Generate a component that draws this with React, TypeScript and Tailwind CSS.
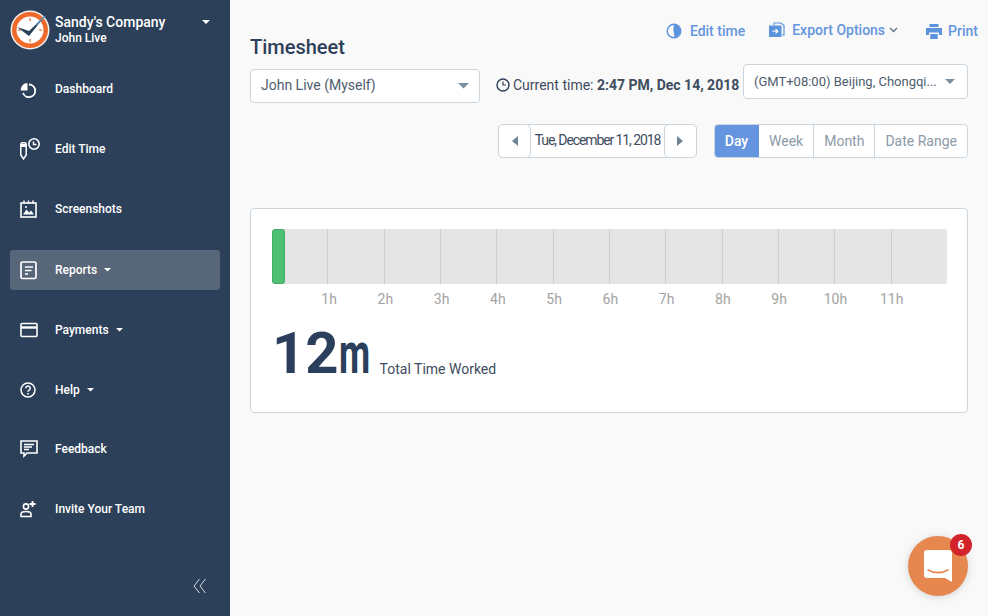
import React from "react";

const white = "#ffffff";

const DashIcon = () => (
  <svg width="17" height="20" viewBox="0 0 17 20" fill="none">
    <path d="M7.5 4v7.5H.7C.7 7.5 3.5 4 7.5 4z" fill={white} />
    <path d="M9 5.5a6.3 6.3 0 1 1-6 8.5" stroke={white} strokeWidth="1.8" />
  </svg>
);

const EditTimeIcon = () => (
  <svg width="21" height="24" viewBox="0 0 21 24" fill="none">
    <path d="M.8 7.5c0-1 .7-1.7 1.7-1.7h2c1 0 1.7.7 1.7 1.7V18l-2.700 4-2.700-4z" stroke={white} strokeWidth="1.5" />
    <path d="M.8 7h5.4v3H.8z" fill={white} />
    <circle cx="14" cy="7" r="5.2" stroke={white} strokeWidth="1.6" />
    <path d="M13.5 4.5v3h3" stroke={white} strokeWidth="1.4" />
  </svg>
);

const ScreenshotIcon = () => (
  <svg width="17" height="18" viewBox="0 0 17 18" fill="none">
    <rect x="1" y="3" width="15" height="14" stroke={white} strokeWidth="1.6" />
    <path d="M4 .5v3M8.5.5v3M13 .5v3" stroke={white} strokeWidth="1.5" />
    <path d="M3 14.5l3.5-5 2.5 3 2-2 3 4z" fill={white} />
    <circle cx="6" cy="7" r="1" fill={white} />
  </svg>
);

const ReportIcon = () => (
  <svg width="18" height="20" viewBox="0 0 18 20" fill="none">
    <rect x="1" y="2" width="15" height="16.5" rx="1.5" stroke={white} strokeWidth="1.7" />
    <path d="M5 7h8M5 10.5h6.5" stroke={white} strokeWidth="1.6" />
    <path d="M5 14h3" stroke={white} strokeWidth="1.6" />
  </svg>
);

const CardIcon = () => (
  <svg width="18" height="16" viewBox="0 0 18 16" fill="none">
    <rect x="1" y="1.5" width="16" height="13" rx="1" stroke={white} strokeWidth="1.6" />
    <path d="M1 5.5h16" stroke={white} strokeWidth="2.4" />
  </svg>
);

const HelpIcon = () => (
  <svg width="16" height="16" viewBox="0 0 16 16" fill="none">
    <circle cx="8" cy="8" r="7" stroke={white} strokeWidth="1.5" />
    <path d="M5.8 6.3a2.2 2.2 0 1 1 3.4 1.8c-.8.5-1.2.9-1.2 1.7" stroke={white} strokeWidth="1.5" />
    <path d="M7.2 11h1.6v1.6H7.2z" fill={white} />
  </svg>
);

const FeedbackIcon = () => (
  <svg width="18" height="18" viewBox="0 0 18 18" fill="none">
    <path d="M1 1h16v12H7l-3 3v-3H1z" stroke={white} strokeWidth="1.6" />
    <path d="M4 4.5h10M4 7h8M4 9.5h5" stroke={white} strokeWidth="1.4" />
  </svg>
);

const InviteIcon = () => (
  <svg width="17" height="18" viewBox="0 0 17 18" fill="none">
    <circle cx="6" cy="6.5" r="2.6" stroke={white} strokeWidth="1.6" />
    <path d="M1 16.5V14c0-1.5 2.5-2.5 5-2.5s5 1 5 2.500v2.500z" stroke={white} strokeWidth="1.6" />
    <path d="M12.5 1v6M9.5 4h6" stroke={white} strokeWidth="1.8" />
  </svg>
);

const Caret = ({ color = "#ffffff", size = 4 }: { color?: string; size?: number }) => (
  <svg width={size * 2} height={size} viewBox="0 0 8 4">
    <path d="M0 0h8L4 4z" fill={color} />
  </svg>
);

const Logo = () => (
  <svg width="40" height="40" viewBox="0 0 40 40" fill="none" className="shrink-0">
    <circle cx="20" cy="20" r="19.5" fill="#f2f2f2" />
    <circle cx="20" cy="20" r="18" fill="#ee6a2b" />
    <circle cx="20" cy="20" r="13.5" fill="#ffffff" />
    <path d="M20 8v3M20 29v3M8 20h3M29 20h3" stroke="#e98a5a" strokeWidth="1.5" />
    <path d="M7 17l12 4L35 6 19 26z" fill="#2b4059" />
    <path d="M26 15L35 6" stroke="#4f90c8" strokeWidth="1.5" />
  </svg>
);

type NavItem = {
  label: string;
  icon: React.ReactNode;
  caret?: boolean;
  active?: boolean;
  className: string;
};

const navItems: NavItem[] = [
  { label: "Dashboard", icon: <DashIcon />, className: "mt-[19px]" },
  { label: "Edit Time", icon: <EditTimeIcon />, className: "mt-5" },
  { label: "Screenshots", icon: <ScreenshotIcon />, className: "mt-5" },
  { label: "Reports", icon: <ReportIcon />, caret: true, active: true, className: "mt-[21px]" },
  { label: "Payments", icon: <CardIcon />, caret: true, className: "mt-5" },
  { label: "Help", icon: <HelpIcon />, caret: true, className: "mt-5" },
  { label: "Feedback", icon: <FeedbackIcon />, className: "mt-[19px]" },
  { label: "Invite Your Team", icon: <InviteIcon />, className: "mt-5" },
];

const Sidebar = () => (
  <aside className="flex h-full w-[230px] shrink-0 flex-col bg-[#2c4059] text-white">
    <div className="flex h-[50px] items-end pl-[10px]">
      <Logo />
      <div className="ml-[5px] flex-1 pb-[5px]">
        <div className="flex items-center">
          <p className="w-[147px] text-[14px] leading-[18px] font-medium">Sandy's Company</p>
          <Caret />
        </div>
        <p className="text-[12px] leading-[14px] font-medium">John Live</p>
      </div>
    </div>
    <nav className="flex flex-col px-[10px]">
      {navItems.map((item) => (
        <div
          key={item.label}
          className={`flex h-10 items-center rounded-[3px] ${item.className} ${
            item.active ? "bg-[#576678]" : ""
          }`}
        >
          <span className="flex w-[45px] pl-[10px]">{item.icon}</span>
          <span className="text-[12px] font-medium">{item.label}</span>
          {item.caret && (
            <span className="ml-[7px]">
              <Caret size={3.5} />
            </span>
          )}
        </div>
      ))}
    </nav>
    <div className="mt-auto flex justify-end pr-[23px] pb-[22px]">
      <svg width="14" height="16" viewBox="0 0 14 16" fill="none">
        <path d="M6.5 1L1 8l5.5 7M12.5 1L7 8l5.5 7" stroke="#d5dae0" strokeWidth="1" />
      </svg>
    </div>
  </aside>
);

const TopActions = () => (
  <div className="flex items-center text-[14px] leading-5 font-medium text-[#6495de]">
    <span className="flex items-center gap-[8px]">
      <svg width="16" height="16" viewBox="0 0 16 16" fill="none">
        <circle cx="8" cy="8" r="6.8" stroke="#5b93dc" strokeWidth="1.4" />
        <path d="M8 1.5a6.5 6.5 0 0 1 0 13C9.5 12 6 8 8 1.5z" fill="#5b93dc" />
      </svg>
      Edit time
    </span>
    <span className="mb-[2px] ml-[24px] flex items-center gap-[7px]">
      <svg width="16" height="16" viewBox="0 0 16 16" fill="none">
        <path d="M5 3V1h7l3 2.5V13h-2" stroke="#5b93dc" strokeWidth="1.2" />
        <path d="M0 3.5h12.5V15H0z" fill="#5b93dc" />
        <path d="M3.5 9.2h5M6.5 6.8l2.4 2.4-2.4 2.4" stroke="#f9f9f9" strokeWidth="1.2" />
      </svg>
      Export Options
      <svg width="9" height="6" viewBox="0 0 9 6" fill="none" className="-ml-[3px]">
        <path d="M1 1l3.5 3.5L8 1" stroke="#5f7890" strokeWidth="1.4" />
      </svg>
    </span>
    <span className="ml-[28px] flex items-center gap-[6px]">
      <svg width="16" height="15" viewBox="0 0 16 15">
        <path d="M3.5 0h9v3h-9z M0 4h16v7h-3V8.5H3V11H0z M4.3 10h7.4v5H4.3z" fill="#5b93dc" />
      </svg>
      Print
    </span>
  </div>
);

const PagerButton = ({ dir }: { dir: "left" | "right" }) => (
  <span className="flex h-full w-[33px] items-center justify-center rounded-[5px] border border-[#cbd5de] bg-white">
    <svg width="6" height="10" viewBox="0 0 6 10">
      <path d={dir === "left" ? "M6 0v10L0 5z" : "M0 0v10l6-5z"} fill="#6f8596" />
    </svg>
  </span>
);

const tabs = ["Week", "Month", "Date Range"];
const hours = ["1h", "2h", "3h", "4h", "5h", "6h", "7h", "8h", "9h", "10h", "11h"];

const Chart = () => (
  <div className="mt-5 mr-5 ml-[21px]">
    <div className="relative flex h-[55px] rounded-[3px] bg-[#e5e5e5]">
      {Array.from({ length: 12 }).map((_, i) => (
        <div key={i} className="flex-1 border-l border-[#cdcdcd] first:border-l-0" />
      ))}
      <div className="absolute top-0 left-0 h-full w-[13px] rounded-[3px] border border-[#3fa968] bg-[#4fc072]" />
    </div>
    <div className="mt-[6px] flex pl-[29px]">
      {hours.map((h) => (
        <span key={h} className="w-[56.25px] text-center text-[14px] leading-[18px] text-[#a3a3a3]">
          {h}
        </span>
      ))}
    </div>
  </div>
);

export default function App() {
  return (
    <div className="flex h-[616px] w-[988px] overflow-hidden bg-[#f9f9f9] font-['Roboto',sans-serif]">
      <Sidebar />
      <main className="relative flex-1 pr-5 pl-5 text-[#3e4c5e]">
        <div className="flex items-start justify-between">
          <h1 className="mt-[35px] text-[20px] leading-[24px] font-medium text-[#2d4059]">Timesheet</h1>
          <div className="mt-[20px] -mr-[10px]">
            <TopActions />
          </div>
        </div>

        <div className="mt-[5px] flex items-start">
          <div className="mt-[5px] flex h-[34px] w-[230px] items-center justify-between rounded-[4px] border border-[#cbd5de] bg-white pr-[10px] pl-[10px] text-[14px] text-[#4e5d6e]">
            <span className="mb-[2px]">John Live (Myself)</span>
            <Caret color="#7a8f9f" size={5.5} />
          </div>
          <div className="mt-[4px] ml-[16px] flex h-[34px] items-center text-[14px] text-[#3e4c5e]">
            <svg width="14" height="14" viewBox="0 0 14 14" fill="none" className="mr-[3px]">
              <circle cx="7" cy="7" r="6" stroke="#2d4059" strokeWidth="1.4" />
              <path d="M7 3.5V7h3" stroke="#2d4059" strokeWidth="1.2" />
            </svg>
            <span>
              Current time: <b className="font-bold">2:47 PM, Dec 14, 2018</b>
            </span>
          </div>
          <div className="ml-auto flex h-[35px] w-[225px] items-center justify-between rounded-[4px] border border-[#cbd5de] bg-white pr-[12px] pl-[10px] text-[13px] text-[#4e5d6e]">
            (GMT+08:00) Beijing, Chongqi...
            <Caret color="#7a8f9f" size={5} />
          </div>
        </div>

        <div className="mt-[21px] flex h-[34px] justify-end">
          <div className="flex h-full w-[199px] items-center justify-between rounded-[5px] border border-[#cbd5de] bg-white">
            <span className="-my-px -ml-px h-[34px]">
              <PagerButton dir="left" />
            </span>
            <span className="mb-[2px] text-[14px] tracking-[-1.1px] whitespace-nowrap text-[#3e4c5e]">
              Tue, December 11, 2018
            </span>
            <span className="-my-px -mr-px h-[34px]">
              <PagerButton dir="right" />
            </span>
          </div>
          <div className="ml-[17px] flex h-full w-[254px] overflow-hidden rounded-[4px] border border-[#cbd5de] bg-white text-[14px] text-[#8b9aa7]">
            <span className="-my-px -ml-px flex w-[45px] items-center justify-center bg-[#6495de] font-medium text-white">
              Day
            </span>
            {tabs.map((t) => (
              <span
                key={t}
                className="flex flex-auto items-center justify-center border-r border-[#cbd5de] last:border-r-0"
              >
                {t}
              </span>
            ))}
          </div>
        </div>

        <section className="mt-[50px] h-[205px] rounded-[4px] border border-[#cbd5de] bg-white">
          <Chart />
          <div className="mt-[17px] flex items-end pl-[21px]">
            <span className="flex text-[58px] leading-[56px] font-bold text-[#2a3f5c]">
              12
              <span className="inline-block w-[33px] origin-left scale-x-[0.62]">m</span>
            </span>
            <span className="mb-[3px] ml-[8px] text-[14px] leading-[18px] text-[#3e4c5e]">Total Time Worked</span>
          </div>
        </section>

        <div className="absolute right-5 bottom-5 flex h-[60px] w-[60px] items-center justify-center rounded-full bg-[#e5874f] shadow-[0_1px_8px_rgba(0,0,0,0.15)]">
          <svg width="28" height="32" viewBox="0 0 28 32">
            <path d="M3 0h22a3 3 0 0 1 3 3v29l-7-4H3a3 3 0 0 1-3-3V3a3 3 0 0 1 3-3z" fill="#ffffff" />
            <path d="M4 20c6 3.5 14 3.5 20 0" fill="none" stroke="#e5874f" strokeWidth="1.6" strokeLinecap="round" />
          </svg>
          <span className="absolute -top-[2px] -right-[4px] flex h-[22px] w-[22px] items-center justify-center rounded-full bg-[#d3232a] text-[12px] font-bold text-white">
            6
          </span>
        </div>
      </main>
    </div>
  );
}
